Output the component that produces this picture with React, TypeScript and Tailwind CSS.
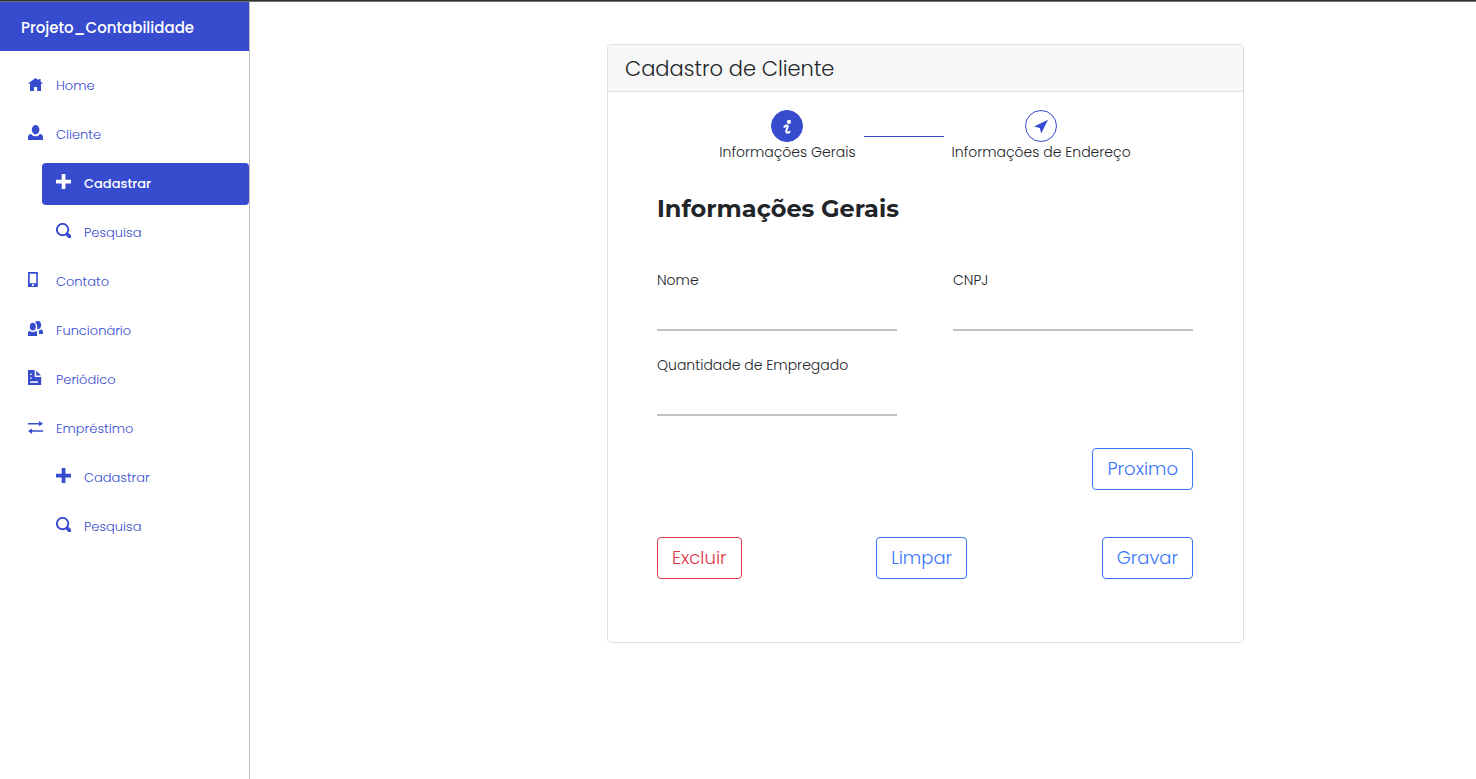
import type { ReactNode } from "react";

function Icon({ children, className = "" }: { children: ReactNode; className?: string }) {
  return (
    <svg viewBox="0 0 16 16" fill="currentColor" aria-hidden="true" className={`size-4 shrink-0 ${className}`}>
      {children}
    </svg>
  );
}

const icons = {
  home: (
    <path d="M7.6 2 0.4 7.3 0.9 8.1 2 7.5V15H6V11H9.2V15H13V7.5L14.2 8.1 14.8 7.3 12.6 5.8V3.1H10.7V4.3Z" />
  ),
  user: (
    <>
      <ellipse cx="7.6" cy="4.7" rx="3.8" ry="4.7" />
      <path d="M3.2 9C4.2 10.6 5.8 11.3 7.6 11.3S11 10.6 11.9 9C13.9 9.2 15 10.5 15 12.4V15H0V12.4C0 10.5 1.2 9.2 3.2 9Z" />
    </>
  ),
  plus: <path d="M5.7 0H9.4V5.8H15V9.4H9.4V15H5.7V9.4H0V5.8H5.7Z" />,
  search: (
    <>
      <circle cx="6.6" cy="6.6" r="5.7" fill="none" stroke="currentColor" strokeWidth="1.9" />
      <path d="M9.2 11.6 11.5 9.3 15 12.2V15H12.3Z" />
    </>
  ),
  phone: (
    <path
      fillRule="evenodd"
      d="M0 0H9.8V15H0ZM1.7 1.8V11.3H8.2V1.8ZM4 12.3V14H5.9V12.3Z"
    />
  ),
  users: (
    <>
      <ellipse cx="4.8" cy="5.6" rx="3" ry="3.9" />
      <path d="M7 0.8C8 0.1 9.1 0 10 0 12 0 13.2 1.7 13.2 4S12 7.9 10.3 8.2C9.9 8.2 9.5 8.1 9.2 7.9 9.7 5.3 8.8 2.6 7 0.8Z" />
      <path d="M1.7 9.8C2.5 10.8 3.6 11.2 4.8 11.2S7.1 10.8 7.9 9.8C8.7 10.2 9.1 11.1 9.1 12.2V15H0V12.2C0 11.1 0.7 10.1 1.7 9.8Z" />
      <path d="M10.6 9.6C11.6 9.4 12.5 8.9 13.2 8.2 14.5 8.9 15 9.8 15 11.4V13H11C11 11.6 11 10.5 10.6 9.6Z" />
    </>
  ),
  report: (
    <path
      fillRule="evenodd"
      d="M0 0H6.7V7H13.2V15H0ZM2 3.7V5H3.8V3.7ZM2 7.5V8.8H3.8V7.5ZM2 11.2V12.7H10V11.2ZM8.2 0.6 12.9 5.5H8.2Z"
    />
  ),
  transfer: (
    <path d="M0 4H11V2L15.1 4.7 11 7.3V5.5H0ZM15.1 11.2V12.8H4.1V15L0 12.1 4.1 9.4V11.2Z" />
  ),
};

type IconName = keyof typeof icons;

interface NavEntry {
  label: string;
  icon: IconName;
  sub?: boolean;
  active?: boolean;
}

const entries: NavEntry[] = [
  { label: "Home", icon: "home" },
  { label: "Cliente", icon: "user" },
  { label: "Cadastrar", icon: "plus", sub: true, active: true },
  { label: "Pesquisa", icon: "search", sub: true },
  { label: "Contato", icon: "phone" },
  { label: "Funcionário", icon: "users" },
  { label: "Periódico", icon: "report" },
  { label: "Empréstimo", icon: "transfer" },
  { label: "Cadastrar", icon: "plus", sub: true },
  { label: "Pesquisa", icon: "search", sub: true },
];

function Sidebar() {
  return (
    <aside className="w-[250px] shrink-0 border-r border-[#bfbfbf]">
      <div className="bg-[#364bce] pt-[14px] pb-[11px] pl-[21px] text-[15px] leading-6 font-medium text-white">
        Projeto_Contabilidade
      </div>
      <nav className="flex flex-col gap-[7px] pt-[14px] pl-[14px]">
        {entries.map((entry, index) => (
          <a
            key={index}
            href="#"
            aria-current={entry.active ? "page" : undefined}
            className={`flex h-[42px] items-center gap-3 rounded pl-[14px] text-[13px] ${entry.sub ? "ml-7" : ""} ${
              entry.active ? "bg-[#364bce] font-medium text-white" : "font-light text-[#364bce]"
            }`}
          >
            <Icon className="mb-1">{icons[entry.icon]}</Icon>
            {entry.label}
          </a>
        ))}
      </nav>
    </aside>
  );
}

function Step({ label, active, children }: { label: string; active?: boolean; children: ReactNode }) {
  return (
    <li className="flex flex-col items-center" aria-current={active ? "step" : undefined}>
      <span
        className={`flex size-8 items-center justify-center rounded-full border border-[#364bce] ${
          active ? "bg-[#364bce] text-white" : "bg-white text-[#364bce]"
        }`}
      >
        {children}
      </span>
      <span className="text-sm leading-[21px]">{label}</span>
    </li>
  );
}

function Field({ id, label }: { id: string; label: string }) {
  return (
    <div className="flex w-[240px] flex-col">
      <label htmlFor={id} className="text-sm leading-[21px]">
        {label}
      </label>
      <input id={id} type="text" className="h-10 border-b-2 border-[#c2c2c2] bg-transparent text-sm outline-none" />
    </div>
  );
}

function Button({ children, danger }: { children: ReactNode; danger?: boolean }) {
  return (
    <button
      type="button"
      className={`h-[42px] rounded border px-[14px] text-lg ${
        danger ? "border-[#dc3545] text-[#dc3545]" : "border-[#3a75fb] text-[#3a75fb]"
      }`}
    >
      {children}
    </button>
  );
}

export default function App() {
  return (
    <div className="flex min-h-screen flex-col bg-white font-['Poppins','Inter',sans-serif] font-light text-[#212529]">
      <div className="h-[2px] border-b border-[#6e6e6e] bg-[#353535]" />
      <div className="flex grow">
        <Sidebar />
        <main className="flex grow items-start justify-center pt-[42px] pl-[125px]">
          <section className="w-[637px] overflow-hidden rounded border border-[#dfdfdf]">
            <h1 className="border-b border-[#dfdfdf] bg-[#f7f7f7] pt-2 pb-1.5 pl-[17px] text-[21px] leading-8 font-light">
              Cadastro de Cliente
            </h1>
            <form className="pt-[18px] pr-[50px] pb-[63px] pl-[49px]">
              <ol className="flex justify-center gap-2">
                <Step label="Informações Gerais" active>
                  <svg viewBox="0 0 16 16" className="size-4" fill="none" stroke="currentColor" strokeWidth="2.1" strokeLinecap="round" strokeLinejoin="round" aria-hidden="true">
                    <circle cx="9.9" cy="3.9" r="2.1" fill="currentColor" stroke="none" />
                    <path d="M5.4 8.8C6.4 7.4 8.9 6.8 8.7 8.5 8.5 10 7 12.3 7.2 13.7 7.4 15 9.5 14.9 10.5 13.8" />
                  </svg>
                </Step>
                <li aria-hidden="true" className="mt-[26px] h-px w-20 bg-[#364bce]" />
                <Step label="Informações de Endereço">
                  <svg viewBox="0 0 16 16" className="size-4" fill="currentColor" aria-hidden="true">
                    <path d="M15 1.8 1 8.4 6.8 10 8.2 15.4Z" />
                  </svg>
                </Step>
              </ol>
              <h2 className="mt-[30px] font-['Montserrat','Poppins',sans-serif] text-2xl leading-8 font-bold">
                Informações Gerais
              </h2>
              <div className="mt-[45px] flex flex-wrap justify-between gap-y-6">
                <Field id="nome" label="Nome" />
                <Field id="cnpj" label="CNPJ" />
                <Field id="empregados" label="Quantidade de Empregado" />
              </div>
              <div className="mt-8 flex justify-end">
                <Button>Proximo</Button>
              </div>
              <div className="mt-[47px] flex justify-between">
                <Button danger>Excluir</Button>
                <Button>Limpar</Button>
                <Button>Gravar</Button>
              </div>
            </form>
          </section>
        </main>
      </div>
    </div>
  );
}
